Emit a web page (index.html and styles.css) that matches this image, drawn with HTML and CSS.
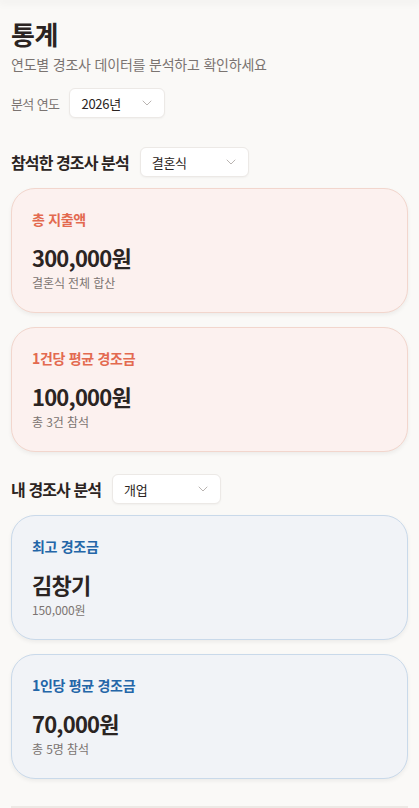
FILE: index.html
```html
<!DOCTYPE html>
<html lang="ko">

<head>
  <meta charset="UTF-8">
  <meta name="viewport" content="width=device-width, initial-scale=1.0">
  <title>통계</title>
  <link rel="stylesheet" href="styles.css">
</head>

<body>
  <div class="topbar"></div>

  <main class="page">
    <div class="page-head">
      <h1>통계</h1>
      <p class="subtitle">연도별 경조사 데이터를 분석하고 확인하세요</p>
    </div>

    <div class="year-row">
      <span class="year-label">분석 연도</span>
      <div class="picker picker-year">
        <span>2026년</span>
        <svg class="chevron" viewBox="0 0 10 6" width="10" height="6"><path d="M1 1l4 4 4-4" fill="none" stroke="currentColor" stroke-width="1" stroke-linecap="round" stroke-linejoin="round"/></svg>
      </div>
    </div>

    <section class="section">
      <div class="section-head">
        <h2>참석한 경조사 분석</h2>
        <div class="picker">
          <span>결혼식</span>
          <svg class="chevron" viewBox="0 0 10 6" width="10" height="6"><path d="M1 1l4 4 4-4" fill="none" stroke="currentColor" stroke-width="1" stroke-linecap="round" stroke-linejoin="round"/></svg>
        </div>
      </div>

      <div class="card card-warm">
        <div class="card-label">총 지출액</div>
        <div class="card-value">300,000원</div>
        <div class="card-note">결혼식 전체 합산</div>
      </div>

      <div class="card card-warm">
        <div class="card-label">1건당 평균 경조금</div>
        <div class="card-value">100,000원</div>
        <div class="card-note">총 3건 참석</div>
      </div>
    </section>

    <section class="section">
      <div class="section-head">
        <h2>내 경조사 분석</h2>
        <div class="picker">
          <span>개업</span>
          <svg class="chevron" viewBox="0 0 10 6" width="10" height="6"><path d="M1 1l4 4 4-4" fill="none" stroke="currentColor" stroke-width="1" stroke-linecap="round" stroke-linejoin="round"/></svg>
        </div>
      </div>

      <div class="card card-cool">
        <div class="card-label">최고 경조금</div>
        <div class="card-value">김창기</div>
        <div class="card-note">150,000원</div>
      </div>

      <div class="card card-cool">
        <div class="card-label">1인당 평균 경조금</div>
        <div class="card-value">70,000원</div>
        <div class="card-note">총 5명 참석</div>
      </div>
    </section>

    <div class="next-block"></div>
  </main>
</body>

</html>
```

FILE: styles.css
```css
body {
  margin: 0;
  padding: 0;
  background: #faf9f7;
  color: #2b2422;
  font-family: "Noto Sans CJK KR", "Noto Sans", sans-serif;
}

.topbar {
  height: 0;
  box-shadow: 0 0 10px 2px rgba(0, 0, 0, 0.07);
}

.page {
  padding: 16px 11px 0;
}

.page-head h1 {
  margin: 0;
  font-size: 26px;
  line-height: 36px;
  font-weight: 700;
  letter-spacing: -0.5px;
}

.subtitle {
  margin: 2px 0 0;
  font-size: 14px;
  line-height: 20px;
  color: #7b7471;
  letter-spacing: -0.2px;
}

.year-row {
  display: flex;
  align-items: center;
  gap: 10px;
  margin-top: 14px;
}

.year-label {
  font-size: 13px;
  color: #7b7471;
  letter-spacing: -0.6px;
}

/* fake select box */
.picker {
  box-sizing: border-box;
  width: 109px;
  height: 30px;
  display: flex;
  align-items: center;
  justify-content: space-between;
  padding: 0 12px 0 11px;
  background: #fff;
  border: 1px solid #ece9e6;
  border-radius: 6px;
  box-shadow: 0 1px 2px rgba(0, 0, 0, 0.04);
  font-size: 13px;
  color: #2b2422;
  letter-spacing: -0.3px;
}

.picker-year {
  width: 96px;
}

.chevron {
  color: #b9b4b1;
}

.section {
  margin-top: 29px;
}

.section + .section {
  margin-top: 22px;
}

.section-head {
  display: flex;
  align-items: center;
  gap: 11px;
  margin-bottom: 11px;
}

.section-head h2 {
  margin: 0;
  font-size: 16px;
  font-weight: 700;
  letter-spacing: -0.9px;
}

.card {
  border-radius: 24px;
  padding: 20px 20px;
  margin-bottom: 14px;
  box-shadow: 0 2px 4px rgba(0, 0, 0, 0.06);
}

.card-warm {
  background: #fcf1ef;
  border: 1px solid #f2d6cd;
}

.card-cool {
  background: #f1f3f7;
  border: 1px solid #c9d9ea;
}

.card-label {
  font-size: 14px;
  line-height: 20px;
  font-weight: 700;
  letter-spacing: -0.3px;
}

.card-warm .card-label {
  color: #e36a50;
}

.card-cool .card-label {
  color: #2466a8;
}

.card-value {
  margin-top: 14px;
  font-size: 22px;
  line-height: 29px;
  font-weight: 700;
  letter-spacing: -0.8px;
}

.card-note {
  margin-top: 2px;
  font-size: 12px;
  line-height: 18px;
  color: #7b7471;
  letter-spacing: -0.1px;
}

.next-block {
  margin-top: 27px;
  height: 40px;
  border-top: 2px solid #ede9e5;
}
```
